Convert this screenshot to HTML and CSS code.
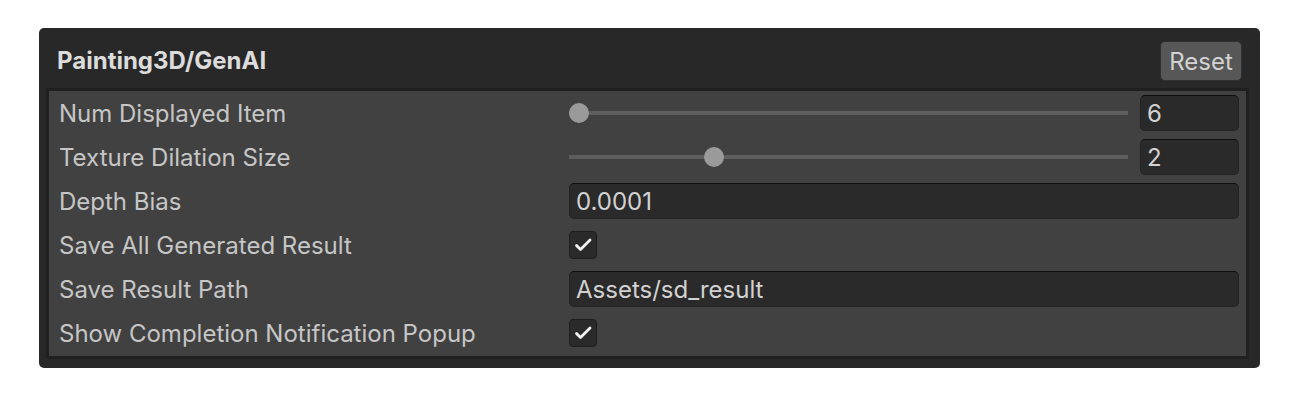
FILE: index.html
```html
<!DOCTYPE html>
<html>
<head>
<meta charset="utf-8">
<link rel="stylesheet" href="styles.css">
</head>
<body>
<div class="panel">
  <div class="header">
    <div class="title">Painting3D/GenAI</div>
    <button class="reset">Reset</button>
  </div>
  <div class="body">
    <div class="row">
      <div class="label">Num Displayed Item</div>
      <div class="field slider-field">
        <div class="slider"><div class="track"></div><div class="knob" style="left:0%"></div></div>
        <div class="input num">6</div>
      </div>
    </div>
    <div class="row">
      <div class="label">Texture Dilation Size</div>
      <div class="field slider-field">
        <div class="slider"><div class="track"></div><div class="knob" style="left:24.2%"></div></div>
        <div class="input num">2</div>
      </div>
    </div>
    <div class="row">
      <div class="label">Depth Bias</div>
      <div class="field"><div class="input wide">0.0001</div></div>
    </div>
    <div class="row">
      <div class="label">Save All Generated Result</div>
      <div class="field"><div class="check"><svg viewBox="0 0 28 28" width="28" height="28"><path d="M7.5 14.5 L11.5 18.5 L21 9" fill="none" stroke="#f4f4f4" stroke-width="2.8" stroke-linecap="round" stroke-linejoin="round"/></svg></div></div>
    </div>
    <div class="row">
      <div class="label">Save Result Path</div>
      <div class="field"><div class="input wide">Assets/sd_result</div></div>
    </div>
    <div class="row">
      <div class="label">Show Completion Notification Popup</div>
      <div class="field"><div class="check"><svg viewBox="0 0 28 28" width="28" height="28"><path d="M7.5 14.5 L11.5 18.5 L21 9" fill="none" stroke="#f4f4f4" stroke-width="2.8" stroke-linecap="round" stroke-linejoin="round"/></svg></div></div>
    </div>
  </div>
</div>
</body>
</html>
```
FILE: styles.css
```css
html, body {
  margin: 0;
  padding: 0;
  background: #ffffff;
}
body {
  font-family: Inter, "Noto Sans", sans-serif;
  padding: 28px 40px 0 39px;
}
.panel {
  width: 1221px;
  height: 340px;
  box-sizing: border-box;
  background: #282828;
  border-radius: 5px;
  padding: 0 11px 9px 7px;
  display: flex;
  flex-direction: column;
}
.header {
  height: 60px;
  display: flex;
  align-items: center;
  justify-content: space-between;
  padding: 0 7px 0 11px;
}
.title {
  font-weight: 700;
  font-size: 24px;
  color: #dcdcdc;
  padding-top: 4px;
}
.reset {
  width: 82px;
  height: 40px;
  margin-top: 6px;
  background: #575757;
  border: 1px solid #303030;
  border-radius: 5px;
  color: #d2d2d2;
  font-family: Inter, "Noto Sans", sans-serif;
  font-size: 24px;
  padding: 0;
}
.body {
  flex: 1;
  background: #414141;
  border: 3px solid #202020;
  display: flex;
  flex-direction: column;
  padding: 0 7px 0 10px;
}
.row {
  height: 44px;
  display: flex;
  align-items: center;
}
.label {
  width: 510px;
  font-size: 24px;
  color: #c6c6c6;
}
.field {
  flex: 1;
  display: flex;
  align-items: center;
}
.slider-field {
  gap: 12px;
}
.slider {
  flex: 1;
  position: relative;
  height: 20px;
}
.track {
  position: absolute;
  left: 0;
  right: 0;
  top: 8px;
  height: 4px;
  background: #5e5e5e;
}
.knob {
  position: absolute;
  top: 0;
  width: 20px;
  height: 20px;
  border-radius: 50%;
  background: #9a9a9a;
}
.input {
  height: 36px;
  box-sizing: border-box;
  background: #2a2a2a;
  border: 1px solid #232323;
  border-top-color: #0e0e0e;
  border-radius: 5px;
  color: #d2d2d2;
  font-size: 24px;
  display: flex;
  align-items: center;
  padding-left: 6px;
}
.num {
  width: 99px;
}
.wide {
  flex: 1;
}
.check {
  width: 28px;
  height: 28px;
  box-sizing: border-box;
  background: #2a2a2a;
  border: 1px solid #1e1e1e;
  border-radius: 4px;
  display: flex;
  align-items: center;
  justify-content: center;
}
.check svg {
  display: block;
  flex: none;
}
```
